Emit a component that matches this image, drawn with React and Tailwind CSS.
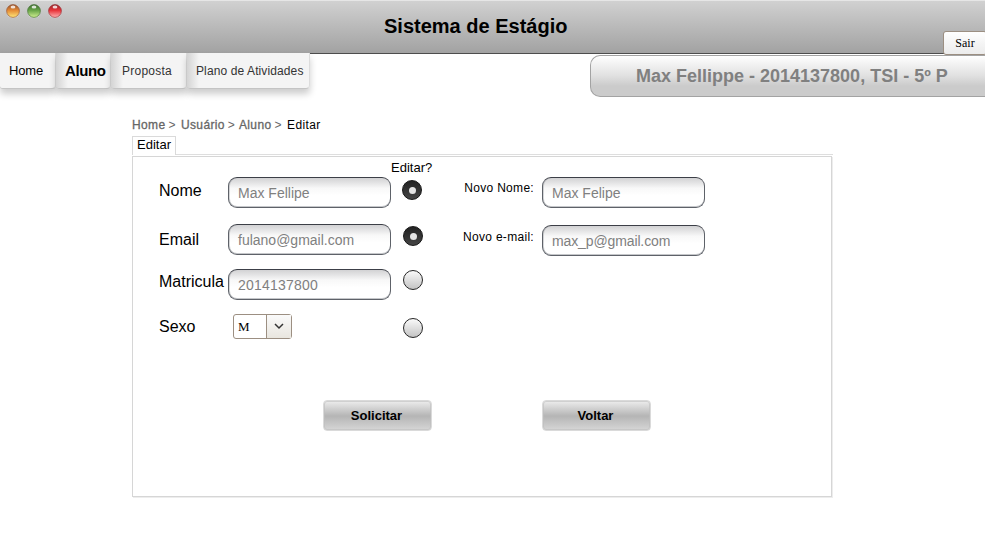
import React from "react";

const sans = "font-['Liberation_Sans',Arial,sans-serif]";

function Light({ id, top, bottom, edge }) {
  return (
    <svg width="14" height="15" viewBox="0 0 14 15">
      <defs>
        <linearGradient id={id} x1="0" y1="0" x2="0" y2="1">
          <stop offset="0" stopColor={edge} />
          <stop offset="0.45" stopColor={top} />
          <stop offset="1" stopColor={bottom} />
        </linearGradient>
      </defs>
      <circle cx="7" cy="7.6" r="6.6" fill="#fff" fillOpacity="0.45" />
      <circle cx="7" cy="7" r="6.4" fill={`url(#${id})`} stroke={edge} strokeOpacity="0.75" strokeWidth="0.9" />
      <ellipse cx="7" cy="2.9" rx="2.4" ry="1.5" fill="#fff" fillOpacity="0.8" />
    </svg>
  );
}

function Field({ children, className = "" }) {
  return (
    <div
      className={`flex h-[31px] w-[163px] items-center rounded-[9px] border border-x-[#5e6269] border-t-[#3c3f47] border-b-[#5e6269] bg-linear-to-b from-[#d2d2d4] via-[#f8f8f8] via-35% to-white to-60% pt-px pl-[9px] text-[14px] whitespace-nowrap text-[#808080] shadow-[inset_0_-1px_0_rgba(90,95,102,0.35),inset_1px_0_0_rgba(90,95,102,0.25)] ${className}`}
    >
      {children}
    </div>
  );
}

function Radio({ checked, className = "" }) {
  return checked ? (
    <div className={`flex size-5 items-center justify-center rounded-full border border-[#161616] bg-linear-to-b from-[#222] to-[#454545] ${className}`}>
      <div className="size-[7px] rounded-full bg-[#e4e4e4]" />
    </div>
  ) : (
    <div className={`size-5 rounded-full border border-[#262626] bg-linear-to-b from-[#fafafa] to-[#c4c4c4] ${className}`} />
  );
}

function Tab({ children, className = "" }) {
  return (
    <div className={`flex h-9 items-center rounded-br-[4px] rounded-bl-[3px] border-r border-b border-r-[#dcdcdc] border-b-[#c4c4c4] whitespace-nowrap shadow-[0_5px_7px_rgba(0,0,0,0.2)] ${className}`}>
      {children}
    </div>
  );
}

const tabFill = "bg-linear-to-r from-[#d4d4d4] to-[#f4f4f4] to-[12px]";

function Button({ children, className = "" }) {
  return (
    <button
      className={`h-[31px] w-[109px] rounded-[4px] border border-[#dadada] bg-linear-to-b from-[#ededed] via-[#b5b5b5] via-52% to-[#d6d6d6] pr-[2px] text-[13px] font-bold text-black shadow-[inset_0_0_0_1px_rgba(190,190,190,0.6)] ${className}`}
    >
      {children}
    </button>
  );
}

function Crumb({ children, className }) {
  return (
    <span className={`flex ${className}`}>
      <span className="tracking-[0.35px] [-webkit-text-stroke:0.3px_#666]">{children}</span>
      <span className="ml-[3px]">&gt;</span>
    </span>
  );
}

export default function App() {
  return (
    <div className={`h-[533px] w-[985px] overflow-hidden bg-white text-black ${sans}`}>
      <header className="flex h-[54px] justify-between border-t border-b border-t-[#e6e6e6] border-b-[#4d4d4d] bg-linear-to-b from-[#d1d1d1] to-[#a2a2a2]">
        <div className="flex w-[384px] gap-[7px] pt-[3px] pl-[6px]">
          <Light id="amber" top="#e58a35" bottom="#ffe97a" edge="#94512e" />
          <Light id="green" top="#68a548" bottom="#d2f192" edge="#3e6b30" />
          <Light id="red" top="#e8343a" bottom="#ffb3b3" edge="#93262b" />
        </div>
        <h1 className="w-[200px] pt-[11px] text-[20px] leading-7 font-bold whitespace-nowrap">Sistema de Estágio</h1>
        <div className="flex flex-1 items-end justify-end">
          <button className="relative z-10 -mr-[2px] -mb-[2px] h-6 w-11 shrink-0 rounded-[3px] border border-[#9c8f82] bg-linear-to-b from-white via-[#f5f5f5] to-[#ececec] text-center font-['Liberation_Serif',serif] text-[12px]">
            Sair
          </button>
        </div>
      </header>

      <div className="-mt-px flex h-[62px] justify-between">
        <nav className="relative flex">
          <Tab className="w-[56px] bg-[#f4f4f4] pt-px pl-[9px] text-[13px] tracking-[-0.15px]">Home</Tab>
          <Tab className={`w-[55px] pt-px pl-[9px] text-[15px] font-bold tracking-[-0.4px] ${tabFill}`}>Aluno</Tab>
          <Tab className={`w-[76px] pl-[11px] text-[12px] tracking-[0.25px] text-[#333] ${tabFill}`}>Proposta</Tab>
          <Tab className={`w-[123px] pl-[9px] text-[12px] tracking-[0.11px] text-[#333] ${tabFill}`}>Plano de Atividades</Tab>
        </nav>
        <div className="mt-[2px] flex h-[42px] w-[395px] items-center rounded-l-[10px] border border-r-0 border-[#a3a3a3] bg-linear-to-b from-white via-[#e0e0e0] via-50% to-[#cbcbcb] to-75% pl-[45px] text-[18px] font-bold whitespace-nowrap text-[#808080]">
          Max Fellippe - 2014137800, TSI - 5º P
        </div>
      </div>

      <main className="ml-[132px] w-[701px] pt-[2px]">
        <div className="flex h-[15px] items-center text-[12px] whitespace-nowrap text-[#666]">
          <Crumb className="w-[49px]">Home</Crumb>
          <Crumb className="w-[58px]">Usuário</Crumb>
          <Crumb className="w-[48px]">Aluno</Crumb>
          <span className="tracking-[0.4px] text-black">Editar</span>
        </div>
        <div className="mt-[4px] flex h-[19px]">
          <div className="w-11 border border-b-0 border-[#dadada] pl-1 text-[13px] leading-[16px]">Editar</div>
          <div className="flex-1 border-b border-[#dedede]" />
        </div>
        <section className="mt-px h-[341px] w-[700px] border border-[#d6d6d6] shadow-[1px_1px_0_#ededed]">
          <div className="flex h-[243px]">
            <div className="w-[95px] pl-[26px] text-[16px] leading-5 whitespace-nowrap">
              <p className="mt-[24px]">Nome</p>
              <p className="mt-[29px]">Email</p>
              <p className="mt-[22px]">Matricula</p>
              <p className="mt-[25px]">Sexo</p>
            </div>
            <div className="w-[162px] pt-5">
              <Field>Max Fellipe</Field>
              <Field className="mt-4">fulano@gmail.com</Field>
              <Field className="mt-[14px] pt-[2px] tracking-[0.22px]">2014137800</Field>
              <div className="mt-[14px] ml-[5px] flex h-[25px] w-[59px] rounded-[3px] border border-[#9c8f82] font-['Liberation_Serif',serif] text-[13px] leading-[24px]">
                <span className="w-[32px] pl-1">M</span>
                <span className="flex flex-1 items-center justify-center border-l border-[#9c8f82] bg-linear-to-b from-[#fafafa] to-[#e9e6df]">
                  <svg width="10" height="7" viewBox="0 0 10 7" fill="none" stroke="#333" strokeWidth="1.5">
                    <path d="M1 1l4 4 4-4" />
                  </svg>
                </span>
              </div>
            </div>
            <div className="w-[62px] pl-[12px]">
              <p className="mt-[3px] -ml-[11px] text-[13px] leading-[15px] whitespace-nowrap">Editar?</p>
              <Radio checked className="mt-[5px]" />
              <Radio checked className="mt-[26px] ml-px" />
              <Radio className="mt-[24px] ml-px" />
              <Radio className="mt-[28px] ml-px" />
            </div>
            <div className="w-[82px] text-right text-[12px] leading-4 tracking-[0.3px] whitespace-nowrap">
              <p className="mt-[23px]">Novo Nome:</p>
              <p className="mt-[33px]">Novo e-mail:</p>
            </div>
            <div className="pt-5 pl-2">
              <Field>Max Felipe</Field>
              <Field className="mt-[17px] tracking-[-0.12px]">max_p@gmail.com</Field>
            </div>
          </div>
          <div className="flex gap-[110px] pl-[190px]">
            <Button>Solicitar</Button>
            <Button>Voltar</Button>
          </div>
        </section>
      </main>
    </div>
  );
}
